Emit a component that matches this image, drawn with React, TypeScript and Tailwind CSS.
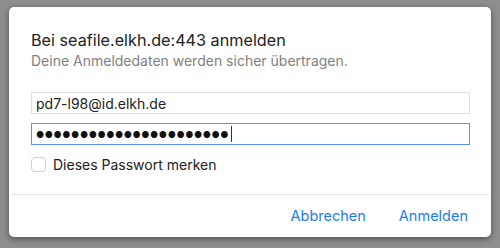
export default function App() {
  return (
    <div className="w-[500px] h-[248px] bg-[#8e8e8e] pt-[7px] pl-[9px] font-['Inter','Noto_Sans',sans-serif]">
      <div className="w-[482px] h-[230px] bg-white rounded-[5px] shadow-[0_2px_6px_rgba(0,0,0,0.45)] flex flex-col">
        <div className="px-[22px] pt-[23px] flex-1">
          <h1 className="text-[16.2px] leading-[20px] text-[#222]">Bei seafile.elkh.de:443 anmelden</h1>
          <p className="mt-[2px] text-[14px] leading-[18px] text-[#7f7f7f]">Deine Anmeldedaten werden sicher übertragen.</p>
          <div className="mt-[22px] w-[439px] h-[22px] border border-[#e0e0e0] flex items-center px-[4px] text-[14px] text-[#222]">
            pd7-l98@id.elkh.de
          </div>
          <div className="mt-[9px] w-[439px] h-[22px] border border-[#5b8ff0] flex items-center px-[4px]">
            <span className="text-[9px] tracking-[0.55px] text-[#111] leading-none">●●●●●●●●●●●●●●●●●●●●●●</span>
            <span className="ml-[2px] w-px h-[16px] bg-[#333]"></span>
          </div>
          <label className="mt-[9px] flex items-center gap-[7px]">
            <span className="w-[15px] h-[15px] rounded-[4px] border border-[#cfcfcf] bg-white"></span>
            <span className="text-[14px] text-[#222]">Dieses Passwort merken</span>
          </label>
        </div>
        <div className="border-t border-[#e6e6e6] mx-[2px] h-[43px] flex items-center justify-end gap-[33px] pr-[21px]">
          <button className="text-[14.5px] text-[#1a7cf5]">Abbrechen</button>
          <button className="text-[14.5px] text-[#1a7cf5]">Anmelden</button>
        </div>
      </div>
    </div>
  )
}
